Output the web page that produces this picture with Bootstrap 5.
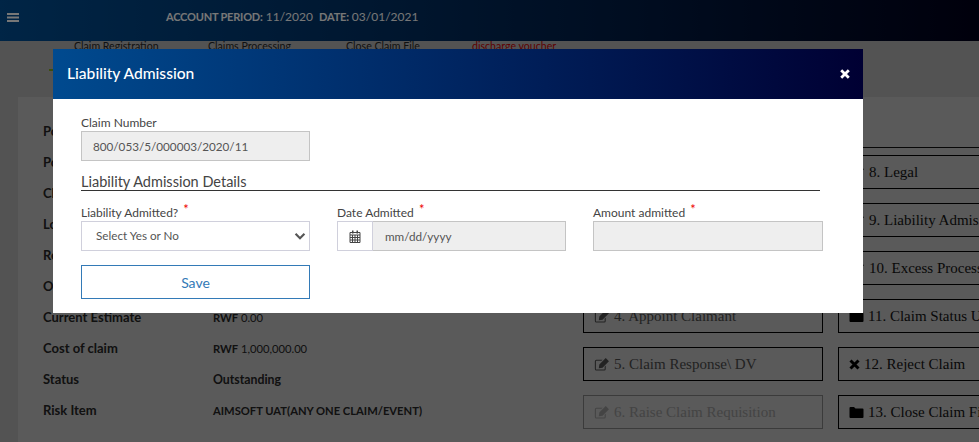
<!DOCTYPE html>
<html lang="en">
<head>
<meta charset="utf-8">
<title>Liability Admission</title>
<link rel="stylesheet" href="https://cdn.jsdelivr.net/npm/bootstrap@5.3.0/dist/css/bootstrap.min.css">
<style>
html,body{height:100%;overflow:hidden}
body{background:#a6a6a6;font-family:Lato,"Noto Sans",sans-serif;font-size:13px;color:#222}
.topbar{height:41px;background:linear-gradient(90deg,#004a8c,#000018);color:#eee;padding:0 7px 7px}
.burger{width:12px;margin-right:147px}
.acct{font-size:12px}
.acct b{font-size:11px;letter-spacing:-.2px}
.subtabs{height:22px;font-size:10.6px;line-height:10px;padding-left:74px;color:#222}
.subtabs span:nth-child(1){width:134px}
.subtabs span:nth-child(2){width:138px}
.subtabs span:nth-child(3){width:126px}
.subtabs .redlink{color:#b00;width:auto}
.greenbar{height:2px;width:60px;margin:6px 0 0 49px;background:#7a9a1a}
.pagecard{margin:26px 0 0 18px;background:#b4b4b4;height:400px;width:1100px}
.infocol{width:565px;padding:19px 0 0 25px;flex:none}
.inforow{height:31px;line-height:31px;color:#222;display:flex;align-items:baseline}
.inforow .lbl{width:170px;flex:none}
.inforow .val{font-size:12.3px;white-space:nowrap}
.inforow .val.tight{font-size:11.2px}
.actioncol{width:255px;flex:none}
.colhead{height:51px;border-bottom:1px solid #111}
.gap7{height:7px}
.gap151{height:151px}
.actbtn{height:34px;margin-bottom:14px;border:1px solid #000;font:15px/31px "Liberation Serif",serif;color:#111;padding:1px 0 0 10px;white-space:nowrap;overflow:hidden;display:flex;align-items:center;gap:4px}
.actbtn svg{flex:none}
.boxed{width:240px;color:#444}
.boxed.off{color:#888;border-color:#777}
.modal-backdrop{opacity:.5}
.modal-dialog{margin:49px 0 0 53px;max-width:810px;width:810px}
.modal-content{border:0;border-radius:0;height:264px;background:#fff}
.modal-header{height:50px;padding:0 13px 0 14px;border:0;border-radius:0;background:linear-gradient(90deg,#004a8f,#000033);color:#fff}
.modal-title{font-size:15.6px;line-height:1}
.xbtn{background:none;border:0;padding:0;display:flex}
.modal-body{padding:16px 28px;color:#444;font-size:12px}
.flabel{display:block;line-height:15px;margin-bottom:1px}
.req{color:#e00;position:relative;top:-3px;margin-left:2px;font-size:13px}
.w229{width:229px}
.fctl{height:30px;border-radius:0;font-size:11.7px;padding:0 11px;color:#555;border:1px solid #d0d0dc}
.fctl:disabled,.fctl[readonly]{background:#eee;border-color:#c4c4c4;color:#555;opacity:1}
.sect{font-size:14.5px;line-height:16px;margin-top:13px;border-bottom:1px solid #333;width:739px;color:#444}
.fgrid{display:grid;grid-template-columns:256px 256px 230px;margin-top:14px}
.form-select.fctl{padding-left:14px;background-size:12px 8px;background-position:right 3px center;background-image:url("data:image/svg+xml,%3Csvg xmlns='http://www.w3.org/2000/svg' viewBox='0 0 13 9'%3E%3Cpath d='M1.5 2 6.5 7 11.5 2' fill='none' stroke='%23555' stroke-width='2.4'/%3E%3C/svg%3E")}
.addon{width:36px;height:30px;border:1px solid #d0d0dc;border-radius:0;background:#fff;padding:0;justify-content:center;flex:none}
.input-group .dateinp{width:193px;flex:none;border-left:0;padding-left:12px;margin-left:0!important}
.savebtn{width:229px;height:34px;margin-top:14px;border:1px solid #337ab7;border-radius:0;color:#337ab7;background:#fff;font-size:14px;padding:0}
</style>
</head>
<body>
<nav class="topbar d-flex align-items-center">
  <svg class="burger" width="12" height="9" viewBox="0 0 12 9"><path d="M0 0h12v2H0zM0 3.5h12v2H0zM0 7h12v2H0z" fill="#eee"/></svg>
  <div class="acct"><b>ACCOUNT PERIOD:</b> 11/2020 &nbsp;<b>DATE:</b> 03/01/2021</div>
</nav>
<div class="subtabs d-flex align-items-start"><span>Claim Registration</span><span>Claims Processing</span><span>Close Claim File</span><span class="redlink">discharge voucher</span></div>
<div class="greenbar"></div>
<main class="pagecard d-flex">
  <section class="infocol">
    <div class="inforow"><b class="lbl">Policy Number</b></div>
    <div class="inforow"><b class="lbl">Policyholder</b></div>
    <div class="inforow"><b class="lbl">Claim Number</b></div>
    <div class="inforow"><b class="lbl">Loss Date</b></div>
    <div class="inforow"><b class="lbl">Reported Date</b></div>
    <div class="inforow"><b class="lbl">Outstanding</b></div>
    <div class="inforow"><b class="lbl">Current Estimate</b><span class="val tight"><b>RWF</b> 0.00</span></div>
    <div class="inforow"><b class="lbl">Cost of claim</b><span class="val tight"><b>RWF</b> 1,000,000.00</span></div>
    <div class="inforow"><b class="lbl">Status</b><b class="val">Outstanding</b></div>
    <div class="inforow"><b class="lbl">Risk Item</b><b class="val tight">AIMSOFT UAT(ANY ONE CLAIM/EVENT)</b></div>
  </section>
  <section class="actioncol">
    <div class="colhead"></div>
    <div class="gap151"></div>
    <div class="actbtn boxed"><svg width="16" height="15" viewBox="0 0 15 14"><path d="M11 8v3.200a1.500 1.500 0 0 1-1.500 1.500H2.300A1.500 1.500 0 0 1 .8 11.200V4a1.500 1.500 0 0 1 1.500-1.500H8L7 3.500H2.300a.5.5 0 0 0-.5.5v7.200a.5.5 0 0 0 .5.5h7.200a.5.5 0 0 0 .5-.5V9zM5 7l6-6 3 3-6 6-3.500.5z" fill="#444"/></svg>4. Appoint Claimant</div>
    <div class="actbtn boxed"><svg width="16" height="15" viewBox="0 0 15 14"><path d="M11 8v3.200a1.500 1.500 0 0 1-1.500 1.500H2.300A1.500 1.500 0 0 1 .8 11.200V4a1.500 1.500 0 0 1 1.500-1.500H8L7 3.500H2.300a.5.5 0 0 0-.5.5v7.200a.5.5 0 0 0 .5.5h7.200a.5.5 0 0 0 .5-.5V9zM5 7l6-6 3 3-6 6-3.500.5z" fill="#444"/></svg>5. Claim Response\ DV</div>
    <div class="actbtn boxed off"><svg width="16" height="15" viewBox="0 0 15 14"><path d="M11 8v3.200a1.500 1.500 0 0 1-1.500 1.500H2.300A1.500 1.500 0 0 1 .8 11.200V4a1.500 1.500 0 0 1 1.500-1.500H8L7 3.500H2.300a.5.5 0 0 0-.5.5v7.200a.5.5 0 0 0 .5.5h7.200a.5.5 0 0 0 .5-.5V9zM5 7l6-6 3 3-6 6-3.500.5z" fill="#888"/></svg>6. Raise Claim Requisition</div>
  </section>
  <section class="actioncol">
    <div class="colhead"></div>
    <div class="gap7"></div>
    <div class="actbtn"><svg width="16" height="15" viewBox="0 0 15 14"><path d="M11 8v3.200a1.500 1.500 0 0 1-1.500 1.500H2.300A1.500 1.500 0 0 1 .8 11.200V4a1.500 1.500 0 0 1 1.500-1.500H8L7 3.500H2.300a.5.5 0 0 0-.5.5v7.200a.5.5 0 0 0 .5.5h7.200a.5.5 0 0 0 .5-.5V9zM5 7l6-6 3 3-6 6-3.500.5z" fill="#222"/></svg>8. Legal</div>
    <div class="actbtn"><svg width="16" height="15" viewBox="0 0 15 14"><path d="M11 8v3.200a1.500 1.500 0 0 1-1.500 1.500H2.300A1.500 1.500 0 0 1 .8 11.200V4a1.500 1.500 0 0 1 1.500-1.500H8L7 3.500H2.300a.5.5 0 0 0-.5.5v7.200a.5.5 0 0 0 .5.5h7.200a.5.5 0 0 0 .5-.5V9zM5 7l6-6 3 3-6 6-3.500.5z" fill="#222"/></svg>9. Liability Admission</div>
    <div class="actbtn"><svg width="16" height="15" viewBox="0 0 15 14"><path d="M11 8v3.200a1.500 1.500 0 0 1-1.500 1.500H2.300A1.500 1.500 0 0 1 .8 11.200V4a1.500 1.500 0 0 1 1.500-1.500H8L7 3.500H2.300a.5.5 0 0 0-.5.5v7.200a.5.5 0 0 0 .5.5h7.200a.5.5 0 0 0 .5-.5V9zM5 7l6-6 3 3-6 6-3.500.5z" fill="#222"/></svg>10. Excess Process</div>
    <div class="actbtn"><svg width="15" height="13" viewBox="0 0 15 13"><path d="M1.500 1H5l1.500 1.500h7a1 1 0 0 1 1 1V11a1 1 0 0 1-1 1h-12a1 1 0 0 1-1-1V2a1 1 0 0 1 1-1z" fill="#000"/></svg>11. Claim Status Update</div>
    <div class="actbtn"><svg width="11" height="11" viewBox="0 0 11 11"><path d="M1.500 1.500 9.500 9.500M9.500 1.500 1.500 9.500" stroke="#000" stroke-width="3"/></svg>12. Reject Claim</div>
    <div class="actbtn"><svg width="15" height="13" viewBox="0 0 15 13"><path d="M1.500 1H5l1.500 1.500h7a1 1 0 0 1 1 1V11a1 1 0 0 1-1 1h-12a1 1 0 0 1-1-1V2a1 1 0 0 1 1-1z" fill="#000"/></svg>13. Close Claim File</div>
  </section>
</main>

<div class="modal-backdrop show"></div>
<div class="modal d-block" tabindex="-1">
  <div class="modal-dialog">
    <div class="modal-content">
      <div class="modal-header justify-content-between">
        <h5 class="modal-title">Liability Admission</h5>
        <button class="xbtn" type="button" aria-label="Close"><svg width="10" height="10" viewBox="0 0 10 10"><path d="M1.200 1.200 8.800 8.800M8.800 1.200 1.200 8.800" stroke="#fff" stroke-width="2.800"/></svg></button>
      </div>
      <div class="modal-body">
        <label class="flabel">Claim Number</label>
        <input class="form-control fctl w229" readonly value="800/053/5/000003/2020/11">
        <div class="sect">Liability Admission Details</div>
        <div class="fgrid">
          <div class="w229">
            <label class="flabel">Liability Admitted? <span class="req">*</span></label>
            <select class="form-select fctl"><option>Select Yes or No</option></select>
          </div>
          <div>
            <label class="flabel">Date Admitted <span class="req">*</span></label>
            <div class="input-group flex-nowrap">
              <span class="input-group-text addon"><svg width="12" height="13" viewBox="0 0 12 13"><path d="M1 2.500h10v10H1z M1 5h10M1 7.500h10M1 10h10M3.500 5v7.500M6 5v7.500M8.500 5v7.500" fill="none" stroke="#444" stroke-width="1"/><path d="M3 .5h1.500v3H3zM7.500.5H9v3H7.500z" fill="#444"/></svg></span>
              <input class="form-control fctl dateinp" disabled value="mm/dd/yyyy">
            </div>
          </div>
          <div>
            <label class="flabel">Amount admitted <span class="req">*</span></label>
            <input class="form-control fctl" disabled>
          </div>
        </div>
        <button class="btn savebtn" type="button">Save</button>
      </div>
    </div>
  </div>
</div>
<script src="https://cdn.jsdelivr.net/npm/bootstrap@5.3.0/dist/js/bootstrap.bundle.min.js"></script>
</body>
</html>
